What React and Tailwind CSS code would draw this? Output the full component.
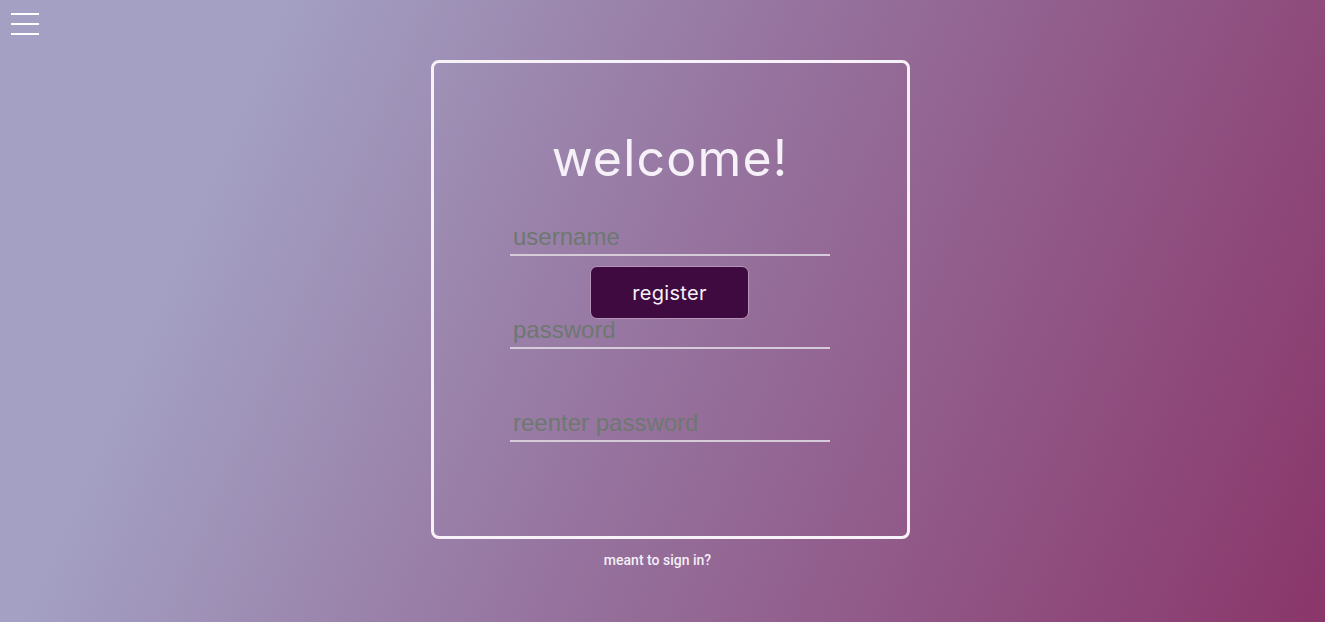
const Field = ({ placeholder, type = "text" }) => (
  <input
    type={type}
    placeholder={placeholder}
    className="w-[320px] h-[37px] bg-transparent border-b-2 border-[#d6cbd8] px-[3px] pt-[1px] pb-[1px] text-[24px] leading-none text-[#6e7870] placeholder:text-[#6e7870] outline-none font-['Liberation_Sans',Arial,sans-serif]"
  />
);

export default function App() {
  return (
    <div className="min-h-screen w-full bg-[linear-gradient(113deg,#a3a0c3_18%,#96749f_50%,#8a366a_100%)] font-['Liberation_Sans',Arial,sans-serif]">
      <button className="absolute left-[11px] top-[13px] flex w-[28px] flex-col gap-[8px]">
        <span className="h-[2px] w-full bg-white" />
        <span className="h-[2px] w-full bg-white" />
        <span className="h-[2px] w-full bg-white" />
      </button>

      <div className="flex flex-col items-center pt-[60px]">
        <div className="ml-[15px] flex h-[479px] w-[479px] flex-col items-center rounded-[8px] border-[3px] border-[#f7f2f8] pt-[70px]">
          <h1 className="text-[50px] leading-none tracking-[1.2px] text-[#f6f1f8] font-['Inter',sans-serif]">
            welcome!
          </h1>

          <div className="relative mt-[36px] flex flex-col gap-[56px]">
            <Field placeholder="username" />
            <Field placeholder="password" type="password" />
            <Field placeholder="reenter password" type="password" />
            <button className="absolute left-[80px] top-[47px] h-[53px] w-[159px] rounded-[7px] border-[1.5px] border-[#b893b8] bg-[#3f0a3f] text-[20px] tracking-[0.3px] text-[#f6f1f8] font-['Inter',sans-serif]">
              register
            </button>
          </div>
        </div>

        <p className="mt-[11px] -translate-x-[5px] text-[14px] font-medium text-[#f4eef6] font-['Roboto',sans-serif]">
          meant to sign in?
        </p>
      </div>
    </div>
  );
}
